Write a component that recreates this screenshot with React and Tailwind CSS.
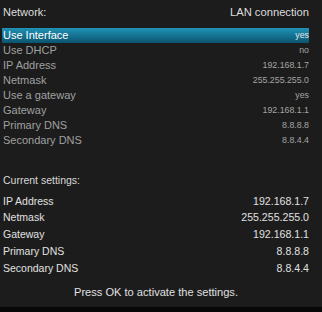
import React from "react";

const config = [
  ["Use Interface", "yes"],
  ["Use DHCP", "no"],
  ["IP Address", "192.168.1.7"],
  ["Netmask", "255.255.255.0"],
  ["Use a gateway", "yes"],
  ["Gateway", "192.168.1.1"],
  ["Primary DNS", "8.8.8.8"],
  ["Secondary DNS", "8.8.4.4"],
];

const current = [
  ["IP Address", "192.168.1.7"],
  ["Netmask", "255.255.255.0"],
  ["Gateway", "192.168.1.1"],
  ["Primary DNS", "8.8.8.8"],
  ["Secondary DNS", "8.8.4.4"],
];

export default function App() {
  return (
    <div
      className="w-[322px] h-[312px] bg-[#080808] flex flex-col overflow-hidden"
      style={{ fontFamily: '"Liberation Sans", Arial, sans-serif' }}
    >
      <div className="h-[307px] bg-[#1c1c1c] flex flex-col pl-[3px] pr-[13px]">
        <div className="flex justify-between items-center h-[24px] pt-[1px] text-[11.2px] text-[#dcdcdc]">
          <span className="text-[11px]">Network:</span>
          <span>LAN connection</span>
        </div>
        <div className="flex flex-col mt-[4px]">
          {config.map(([l, v], i) => (
            <div
              key={l}
              className={
                i === 0
                  ? "flex justify-between items-center h-[15px] -ml-[1px] pl-[1px] bg-gradient-to-b from-[#1f93b6] to-[#0b5470] text-white"
                  : "flex justify-between items-center h-[15px] text-[#a0a0a0]"
              }
            >
              <span className="text-[11px] leading-none">{l}</span>
              <span
                className={
                  i === 0
                    ? "text-[8.8px] leading-none text-[#e6e6e6]"
                    : "text-[8.8px] leading-none text-[#a4a4a4]"
                }
              >
                {v}
              </span>
            </div>
          ))}
        </div>
        <div className="mt-[27px] text-[10.5px] leading-none text-[#d8d8d8]">
          Current settings:
        </div>
        <div className="flex flex-col mt-[7px]">
          {current.map(([l, v]) => (
            <div
              key={l}
              className="flex justify-between items-center h-[16.75px] text-[#e0e0e0]"
            >
              <span className="text-[10.5px] leading-none">{l}</span>
              <span className="text-[10.6px] leading-none">{v}</span>
            </div>
          ))}
        </div>
        <div className="mt-[11px] text-center text-[11.1px] leading-none text-[#e0e0e0]">
          Press OK to activate the settings.
        </div>
      </div>
    </div>
  );
}
